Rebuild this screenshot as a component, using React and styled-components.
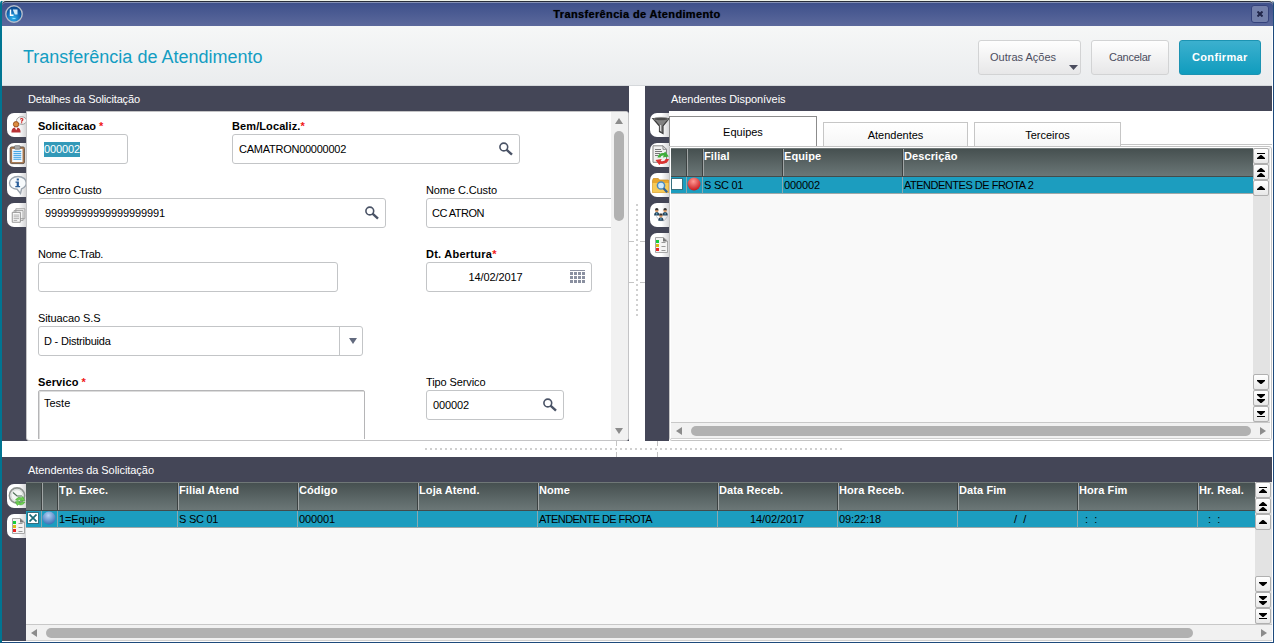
import React from 'react';
import styled, { createGlobalStyle, css } from 'styled-components';

const DARK = '#444657';
const BLUE = '#1c9dbf';

function SearchIcon() {
    return (
        <svg width="14" height="14" viewBox="0 0 14 14" fill="none" stroke="#4a5366">
            <circle cx="4.800" cy="5" r="3.900" strokeWidth="1.600" />
            <path d="M7.500 7.700l5.500 4.900" strokeWidth="2.400" />
        </svg>
    );
}

function CalendarIcon() {
    const cols = [0, 4, 8, 12];
    const rows = [3, 7, 11];
    return (
        <svg width="15" height="14" viewBox="0 0 15 14" fill="#8a90a0">
            <rect width="15" height="1" />
            {rows.map(y => cols.map(x => <rect key={`${x}-${y}`} x={x} y={y - 1} width="3" height="3" />))}
        </svg>
    );
}

function Arrow({ dir, color = '#8c8c8c', w = 7, h = 6 }) {
    const shapes = {
        up: `M0 ${h}L${w / 2} 0L${w} ${h}Z`,
        down: `M0 0H${w}L${w / 2} ${h}Z`,
        left: `M${w} 0V${h}L0 ${h / 2}Z`,
        right: `M0 0V${h}L${w} ${h / 2}Z`,
    };
    return <svg width={w} height={h} fill={color}><path d={shapes[dir]} /></svg>;
}

const navShapes = {
    first: 'M4 5h8v1h-8z M7.5 7h1l3.500 3v1h-8v-1z',
    pageUp: 'M7.5 4h1l3.500 3v1h-8v-1z M7.5 9h1l3.500 3v1h-8v-1z',
    up: 'M7.5 6h1l3.500 3v1h-8v-1z',
    down: 'M4 6h8v1l-3.500 3h-1l-3.500-3z',
    pageDown: 'M4 4h8v1l-3.500 3h-1l-3.500-3z M4 9h8v1l-3.500 3h-1l-3.500-3z',
    last: 'M4 5h8v1l-3.500 3h-1l-3.500-3z M4 10h8v1h-8z',
};

function LogoIcon() {
    return (
        <svg width="18" height="18" viewBox="0 0 18 18">
            <defs>
                <radialGradient id="logo" cx="45%" cy="75%" r="70%">
                    <stop offset="0" stopColor="#30b4ee" />
                    <stop offset=".6" stopColor="#1268b4" />
                    <stop offset="1" stopColor="#0d4486" />
                </radialGradient>
            </defs>
            <circle cx="9" cy="9" r="8.2" fill="url(#logo)" stroke="#b3bccb" strokeWidth="1.4" />
            <path d="M5.5 4.5v5.800h3" fill="none" stroke="#fff" strokeWidth="1.4" />
            <path d="M7.800 4.500h4.700v5H9.800z" fill="#d3ecfa" />
            <path d="M7.5 13.5h3" stroke="#8fdcff" />
        </svg>
    );
}

// icones das abas laterais
const sideIcons = {
    person: (
        <g transform="translate(3.500 1) scale(.92)">
            <ellipse cx="12" cy="5" rx="5.5" ry="4.2" fill="#f4f4f4" stroke="#999" />
            <path d="M9 8.500l-1 3 4-3z" fill="#eee" stroke="#aaa" strokeWidth=".5" />
            <path d="M10.7 3.700q1.5-1.800 2.700-.3.4 1-1.200 2v.8M12.100 6.900v1" fill="none" stroke="#cf2020" strokeWidth="1.3" />
            <circle cx="6" cy="9" r="2.900" fill="#dc8c40" stroke="#9a4f1c" />
            <path d="M1 18q0-5 3.6-5.6h2.8Q11 13 11 18z" fill="#b83236" />
            <path d="M4.6 12.4l1.6 3 1.6-3z" fill="#fff" />
        </g>
    ),
    clipboard: (
        <g transform="translate(2 0) scale(.98)">
            <rect x="1.2" y="2" width="14.6" height="17" rx="1.5" fill="#a9784f" stroke="#6b5a4c" />
            <rect x="3.2" y="4" width="10.6" height="13.4" fill="#f6fbff" />
            <rect x="5.5" y=".7" width="6" height="3.6" rx="1" fill="#aaa" stroke="#666" strokeWidth=".7" />
            <path d="M4.5 6.5h8M4.5 8.5h8M4.5 10.5h8M4.5 12.5h8M4.5 14.5h8" stroke="#2596df" />
        </g>
    ),
    info: (
        <g transform="translate(1.5 0)">
            <path d="M9.5 1.5c5 0 8.2 2.9 8.2 6.5 0 2.6-1.8 4.7-4.6 5.8L12 18.4l-3.4-4.1C4 14 1 11.4 1 8s3.5-6.5 8.500-6.500z" fill="#f7fafc" stroke="#9aa4ae" strokeWidth="1.4" />
            <path d="M8.200 3.500h2.200v2H8.200zM7 6.500h3.400v4.500h1.200v1.200H6.800V11h1.400V7.700H7z" fill="#285d99" />
        </g>
    ),
    copies: (
        <g transform="translate(3 1.500) scale(.9)">
            <path d="M6.500 2.500h10v11h-10z M4.500 4.500h10v11h-10z" fill="#f3f3f3" stroke="#9c9c9c" />
            <path d="M2.500 6.500h9v11h-9z" fill="#fafafa" stroke="#8c8c8c" />
            <path d="M4 9.500h6M4 11.500h6M4 13.500h6M4 15.500h4" stroke="#a5a5a5" />
        </g>
    ),
    funnel: (
        <g transform="translate(1.500 1)">
            <path d="M1.500 2.500h16l-6 7.500v7.500l-3.500-1.800V10z" fill="#818181" stroke="#3c3c3c" strokeWidth="1.200" />
            <ellipse cx="9.500" cy="3" rx="7.500" ry="1.700" fill="#4c4c4c" stroke="#999" strokeWidth=".6" />
            <path d="M9 9v6" stroke="#d7d7d7" strokeWidth="1.300" />
        </g>
    ),
    refreshDoc: (
        <g transform="translate(.5 0)">
            <path d="M2.500.800h10l3.500 3.500v13H2.500z" fill="#f0f0f0" stroke="#858585" />
            <path d="M12.500.800v3.500H16" fill="none" stroke="#858585" />
            <path d="M4.500 4.500h6M4.500 6.500h7M4.500 8.500h5M4.500 10.500h3" stroke="#777" />
            <path d="M7 12.500q1-5 6.500-4.500l1.200-1.500 3.600 5-6 1 1-2q-3-.5-3.300 2z" fill="#3fae3c" />
            <path d="M18.500 14q-1.500 5.500-8.500 4.800l-1.200 1.200L5 15l6.200-1-1 2q4 .8 5-2z" fill="#da3232" />
        </g>
    ),
    folder: (
        <g transform="translate(1 .5)">
            <path d="M1.500 5l.8-2h5l1.200 1.500h9V17h-16z" fill="#e9a62b" stroke="#c98a20" strokeWidth=".7" />
            <path d="M1.500 7.500h16V17h-16z" fill="#f6ca58" />
            <circle cx="10" cy="10" r="3.600" fill="#cfeafc" stroke="#4c8bc0" strokeWidth="1.500" />
            <path d="M12.500 12.800l3.700 4" stroke="#2e5f96" strokeWidth="2.200" />
        </g>
    ),
    people: (
        <g transform="translate(2.800 2.500) scale(.88)">
            <path d="M4 10l4 5h5l4-5M6 7h8" fill="none" stroke="#b9bdc2" />
            {[[4.5, 3.5], [14, 3.5], [9.2, 9.5]].map(([x, y]) => (
                <g key={`${x}-${y}`}>
                    <path d={`M${x - 3} ${y + 5.5}q0-4 3-4t3 4z`} fill="#25445c" />
                    <circle cx={x} cy={y} r="2" fill="#e2a16a" />
                    <path d={`M${x - 2} ${y - 0.5}q0-2.300 2-2.300t2 2.300z`} fill="#333" />
                    <path d={`M${x} ${y + 2.5}v2`} stroke="#7fd0ef" />
                </g>
            ))}
        </g>
    ),
    legend: (
        <>
            <path d="M5.500 2.500h8l4 3.500v11.500h-12z" fill="#f4f4f4" stroke="#a8a8a8" />
            <path d="M13 2.500v4h4.500z" fill="#777" />
            <path d="M11.500 7.500h4M11.500 11.500h4M11.500 15.500h4" stroke="#999" />
            <rect x="6" y="5" width="3" height="3" fill="#16ce3d" />
            <rect x="6" y="9" width="3" height="3" fill="#d8bd18" />
            <rect x="6" y="13" width="3" height="3" fill="#ea2424" />
        </>
    ),
    clock: (
        <g transform="translate(.5 .5)">
            <circle cx="9.500" cy="9" r="7.600" fill="#f3f5f3" stroke="#8e9490" strokeWidth="1.600" />
            <circle cx="9.500" cy="9" r="5.900" fill="none" stroke="#c9cfca" strokeWidth=".7" />
            <path d="M5.500 6l4 3.500h5" fill="none" stroke="#54735b" strokeWidth="1.200" />
            <path d="M8 13.500q2-4 6-2.200l1.200-1.300 2.300 4-4.800.4.800-1.300q-2-.7-3 1z" fill="#6ed04f" stroke="#3c9a34" strokeWidth=".5" />
            <path d="M17.500 15.500q-2 4-6.500 2.500l-1.200 1-2-3.700 4.700-.5-.8 1.400q2 .8 3.200-.9z" fill="#6ed04f" stroke="#3c9a34" strokeWidth=".5" />
        </g>
    ),
};

function SideTabs({ icons }) {
    return (
        <Side>
            {icons.map(name => (
                <SideTab key={name}>
                    <svg width="19" height="20" viewBox="0 0 19 20">{sideIcons[name]}</svg>
                </SideTab>
            ))}
        </Side>
    );
}

function Ball({ color, light, id }) {
    return (
        <BallSvg width="14" height="14" viewBox="0 0 14 14">
            <defs>
                <radialGradient id={id} cx="45%" cy="30%" r="70%">
                    <stop offset="0" stopColor={light} />
                    <stop offset="1" stopColor={color} />
                </radialGradient>
            </defs>
            <circle cx="7" cy="7" r="6.500" fill={`url(#${id})`} />
        </BallSvg>
    );
}

function Field({ label, value, required, bold, gap, span, width, icon, align, selected, pad, spacing, labelSpacing }) {
    return (
        <FieldBox $span={span}>
            <Label $bold={bold} $spacing={labelSpacing}>{label}{required && <Star $gap={gap}>*</Star>}</Label>
            <Input $width={width} $pad={pad}>
                <Value $align={align} $spacing={spacing}>{selected ? <Selected>{value}</Selected> : value}</Value>
                {icon}
            </Input>
        </FieldBox>
    );
}

function NavColumn() {
    const btn = name => (
        <NavButton key={name}>
            <svg width="16" height="16" viewBox="0 0 16 16"><path d={navShapes[name]} /></svg>
        </NavButton>
    );
    return (
        <NavCol>
            <div>{['first', 'pageUp', 'up'].map(btn)}</div>
            <div>{['down', 'pageDown', 'last'].map(btn)}</div>
        </NavCol>
    );
}

function Browse({ columns, row, checked, ball, thumb }) {
    const template = ['16px', '16px', ...columns.map(c => c.width)].join(' ');
    return (
        <BrowseBox>
            <BrowseMain>
                <Grid>
                    <HeadRow $cols={template}>
                        <HeadCell /><HeadCell />
                        {columns.map(c => <HeadCell key={c.title}>{c.title}</HeadCell>)}
                    </HeadRow>
                    <DataRow $cols={template}>
                        <Cell $icon><Check $checked={checked}>{checked && <svg width="8" height="8" stroke="#1b6c77" strokeWidth="1.700"><path d="M.5.5l7 7M7.500.5l-7 7" /></svg>}</Check></Cell>
                        <Cell $icon>{ball}</Cell>
                        {row.map((v, i) => <Cell key={i} $indent={columns[i].indent} $spacing={columns[i].spacing}>{v}</Cell>)}
                    </DataRow>
                </Grid>
                <NavColumn />
            </BrowseMain>
            <HScroll>
                <Arrow dir="left" w={6} h={8} />
                <Track><HThumb $width={thumb} /></Track>
                <Arrow dir="right" w={6} h={8} />
            </HScroll>
        </BrowseBox>
    );
}

const teamColumns = [
    { title: 'Filial', width: '80px', spacing: '-0.25px' },
    { title: 'Equipe', width: '120px', spacing: '-0.1px' },
    { title: 'Descrição', width: '1fr', spacing: '-0.49px' },
];

const requestColumns = [
    { title: 'Tp. Exec.', width: '120px', spacing: '-0.1px' },
    { title: 'Filial Atend', width: '120px', spacing: '-0.25px' },
    { title: 'Código', width: '120px', spacing: '-0.1px' },
    { title: 'Loja Atend.', width: '120px' },
    { title: 'Nome', width: '180px', spacing: '-0.59px' },
    { title: 'Data Receb.', width: '120px', indent: 31, spacing: '-0.1px' },
    { title: 'Hora Receb.', width: '120px', spacing: '-0.1px' },
    { title: 'Data Fim', width: '120px', indent: 55 },
    { title: 'Hora Fim', width: '120px', indent: 6 },
    { title: 'Hr. Real.', width: '1fr', indent: 9 },
];

function App() {
    return (
        <Window>
            <GlobalStyle />
            <TitleBar>
                <LogoIcon />
                <TitleText>Transferência de Atendimento</TitleText>
                <CloseButton>
                    <svg width="6" height="6" stroke="#20264a" strokeWidth="2"><path d="M.5.5l5 5M5.500.5l-5 5" /></svg>
                </CloseButton>
            </TitleBar>
            <Header>
                <H1>Transferência de Atendimento</H1>
                <Button $width="103px" $left="11px">
                    Outras Ações
                    <Caret><Arrow dir="down" color="#4b4d5e" w={9} h={5} /></Caret>
                </Button>
                <Button $width="78px" $left="17px" $spacing="-0.25px">Cancelar</Button>
                <Button $width="82px" $left="12px" $spacing="0.35px" $primary>Confirmar</Button>
            </Header>
            <Top>
                <Panel $width="627px">
                    <PanelTitle $spacing="-0.13px">Detalhes da Solicitação</PanelTitle>
                    <PanelBody>
                        <SideTabs icons={['person', 'clipboard', 'info', 'copies']} />
                        <Card>
                            <Form>
                                <Field label="Solicitacao" value="000002" required gap bold selected width="90px" pad="5px" spacing="-0.1px" />
                                <Field label="Bem/Localiz." value="CAMATRON00000002" required bold span={2} width="288px" icon={<SearchIcon />} spacing="-0.25px" labelSpacing="0.1px" />
                                <Field label="Centro Custo" value="99999999999999999991" span={2} width="348px" icon={<SearchIcon />} spacing="-0.12px" labelSpacing="-0.1px" />
                                <Field label="Nome C.Custo" value="CC ATRON" width="300px" pad="5px" spacing="-0.5px" labelSpacing="-0.1px" />
                                <Field label="Nome C.Trab." value="" span={2} width="300px" labelSpacing="-0.3px" />
                                <Field label="Dt. Abertura" value="14/02/2017" required bold align="center" width="166px" icon={<CalendarIcon />} spacing="-0.1px" labelSpacing="0.25px" />
                                <FieldBox $span={3}>
                                    <Label $spacing="-0.1px">Situacao S.S</Label>
                                    <Input $width="325px" $pad="5px">
                                        <Value $spacing="-0.2px">D - Distribuida</Value>
                                        <SelectArrow><Arrow dir="down" color="#626a7e" w={8} h={6} /></SelectArrow>
                                    </Input>
                                </FieldBox>
                                <FieldBox $span={2}>
                                    <Label $bold $spacing="0.1px">Servico<Star $gap>*</Star></Label>
                                    <TextArea>Teste</TextArea>
                                </FieldBox>
                                <Field label="Tipo Servico" value="000002" width="138px" icon={<SearchIcon />} spacing="-0.1px" labelSpacing="-0.1px" />
                            </Form>
                            <VScroll>
                                <Arrow dir="up" w={8} h={6} />
                                <VTrack><VThumb /></VTrack>
                                <Arrow dir="down" w={8} h={6} />
                            </VScroll>
                        </Card>
                    </PanelBody>
                </Panel>
                <SplitterV>
                    <svg width="16" height="113" viewBox="0 0 16 113" fill="none">
                        <path d="M8 0v113" stroke="#d0d0d0" strokeWidth="2" strokeDasharray="2 3" />
                        <path d="M0 37.500h5M11 37.500h5M0 78.500h5M11 78.500h5" stroke="#c4c4c4" />
                    </svg>
                </SplitterV>
                <Panel $grow>
                    <PanelTitle>Atendentes Disponíveis</PanelTitle>
                    <PanelBody>
                        <SideTabs icons={['funnel', 'refreshDoc', 'folder', 'people', 'legend']} />
                        <TabCard>
                            <Tabs>
                                <Tab $active>Equipes</Tab>
                                <Tab $width="145px">Atendentes</Tab>
                                <Tab $width="147px">Terceiros</Tab>
                                <TabLine />
                            </Tabs>
                            <TabPage>
                                <Browse
                                    columns={teamColumns}
                                    row={['S SC 01', '000002', 'ATENDENTES DE FROTA 2']}
                                    ball={<Ball id="red" color="#c9181d" light="#ff9a94" />}
                                    thumb="560px"
                                />
                            </TabPage>
                        </TabCard>
                    </PanelBody>
                </Panel>
            </Top>
            <SplitterH>
                <svg width="418" height="16" viewBox="0 0 418 16" fill="none">
                    <path d="M0 8h418" stroke="#d0d0d0" strokeWidth="2" strokeDasharray="2 3" />
                    <path d="M191.500 0v5M191.500 11v5M232.500 0v5M232.500 11v5" stroke="#c4c4c4" />
                </svg>
            </SplitterH>
            <BottomPanel>
                <PanelTitle>Atendentes da Solicitação</PanelTitle>
                <PanelBody>
                    <SideTabs icons={['clock', 'legend']} />
                    <Browse
                        columns={requestColumns}
                        row={['1=Equipe', 'S SC 01', '000001', '', 'ATENDENTE DE FROTA', '14/02/2017', '09:22:18', '/  /', ':  :', ':  :']}
                        checked
                        ball={<Ball id="blue" color="#3b70b6" light="#b4d2f5" />}
                        thumb="1147px"
                    />
                </PanelBody>
            </BottomPanel>
        </Window>
    );
}

const GlobalStyle = createGlobalStyle`
    * { box-sizing: border-box; }
    body {
        margin: 0;
        background: #fff;
        font-family: "Liberation Sans", Arial, sans-serif;
        font-size: 11px;
        color: #000;
    }
    svg { display: block; flex: none; }
`;

const Window = styled.div`
    display: flex;
    flex-direction: column;
    width: 1274px;
    height: 643px;
    padding-right: 1px;
    border-left: 2px solid #007592;
    border-right: 1px solid #1d4a7c;
    border-bottom: 1px solid #1d4a7c;
    border-top: 1px solid #eef3ea;
    border-radius: 4px 4px 0 0;
    overflow: hidden;
`;

const TitleBar = styled.div`
    flex: none;
    display: flex;
    align-items: center;
    height: 25px;
    margin-right: -1px;
    padding: 0 4px 0 3px;
    background: linear-gradient(#3c4f8a, #5c699c);
    border-top: 1px solid #272d3a;
    border-radius: 4px 4px 0 0;
    box-shadow: inset 0 1px #8590b3;
`;

const TitleText = styled.div`
    flex: 1;
    text-align: center;
    font-weight: bold;
    letter-spacing: 0.36px;
    text-shadow: 0 0 1px #1a2344;
`;

const CloseButton = styled.div`
    display: flex;
    align-items: center;
    justify-content: center;
    width: 18px;
    height: 18px;
    border: 1px solid #34427c;
    border-radius: 3px;
    background: #727faa;
`;

const Header = styled.div`
    flex: none;
    display: flex;
    align-items: center;
    gap: 10px;
    height: 60px;
    padding: 4px 11px 0 21px;
    background: linear-gradient(#f6f7f7, #eaecee);
    border-bottom: 1px solid #d5d8db;
`;

const H1 = styled.h1`
    flex: 1;
    margin: 0 0 1px;
    font-size: 18px;
    font-weight: normal;
    color: #139dc2;
`;

const Button = styled.div`
    position: relative;
    display: flex;
    align-items: center;
    width: ${p => p.$width};
    height: 35px;
    padding-bottom: 1px;
    padding-left: ${p => p.$left};
    white-space: nowrap;
    letter-spacing: ${p => p.$spacing || 'normal'};
    border: 1px solid #d2d3d4;
    border-radius: 3px;
    background: linear-gradient(#fefefe, #e7e7e8);
    color: #4b4d5e;
    ${p => p.$primary && css`
        border-color: #1c93b2;
        background: linear-gradient(#3cb0ce, #109cbe);
        color: #fff;
        font-weight: bold;
    `}
`;

const Caret = styled.span`
    position: absolute;
    right: 2px;
    bottom: 4px;
`;

const Top = styled.div`
    flex: none;
    display: flex;
    height: 355px;
`;

const Panel = styled.div`
    display: flex;
    flex-direction: column;
    width: ${p => p.$width};
    flex: ${p => p.$grow ? '1' : 'none'};
    min-width: 0;
    background: ${DARK};
`;

const BottomPanel = styled(Panel)`
    height: 184px;
`;

const PanelTitle = styled.div`
    flex: none;
    height: 25px;
    padding-left: 26px;
    line-height: 26px;
    letter-spacing: ${p => p.$spacing || '-0.05px'};
    color: #fff;
`;

const PanelBody = styled.div`
    flex: 1;
    display: flex;
    min-height: 0;
`;

const Side = styled.div`
    flex: none;
    display: flex;
    flex-direction: column;
    align-items: flex-end;
    gap: 6px;
    width: 24px;
    padding-top: 2px;
`;

const SideTab = styled.div`
    display: flex;
    align-items: center;
    width: 19px;
    height: 24px;
    border-radius: 7px 0 0 7px;
    background: linear-gradient(90deg, #fff 60%, #d6d6d8);
    overflow: hidden;
`;

const Card = styled.div`
    flex: 1;
    display: flex;
    min-width: 0;
    border: 1px solid #c4c4c6;
    border-radius: 0 3px 3px 3px;
    background: #fff;
    overflow: hidden;
`;

const Form = styled.div`
    flex: 1;
    display: grid;
    grid-template-columns: 194px 194px 1fr;
    grid-auto-rows: 64px;
    min-width: 0;
    margin-bottom: 1px;
    padding: 6px 0 0 11px;
    overflow: hidden;
`;

const FieldBox = styled.div`
    grid-column: span ${p => p.$span || 1};
    min-width: 0;
`;

const Label = styled.div`
    height: 16px;
    line-height: 17px;
    white-space: nowrap;
    letter-spacing: ${p => p.$spacing || 'normal'};
    font-weight: ${p => p.$bold ? 'bold' : 'normal'};
`;

const Star = styled.span`
    margin-left: ${p => p.$gap ? '3px' : '0'};
    color: #f01818;
`;

const Input = styled.div`
    display: flex;
    align-items: center;
    width: ${p => p.$width};
    height: 30px;
    padding: 0 6px 0 ${p => p.$pad || '6px'};
    border: 1px solid #c3c5c7;
    border-radius: 3px;
    background: #fff;
`;

const Value = styled.span`
    flex: 1;
    padding-right: ${p => p.$align === 'center' ? '12px' : '0'};
    text-align: ${p => p.$align || 'left'};
    letter-spacing: ${p => p.$spacing || 'normal'};
    white-space: nowrap;
`;

const Selected = styled.span`
    display: inline-block;
    height: 15px;
    line-height: 15px;
    background: #3399b8;
    color: #fff;
`;

const SelectArrow = styled.div`
    display: flex;
    align-items: center;
    justify-content: center;
    width: 23px;
    height: 28px;
    margin-right: -6px;
    padding-left: 3px;
    border-left: 1px solid #c3c5c7;
`;

const TextArea = styled.div`
    width: 327px;
    height: 80px;
    padding: 6px 5px;
    border: 1px solid #b5b5b7;
    border-radius: 2px;
    box-shadow: inset 1px 1px #dcdcdc;
`;

const VScroll = styled.div`
    display: flex;
    flex-direction: column;
    align-items: center;
    width: 17px;
    padding: 6px 1px 6px 0;
    background: #f1f1f1;
`;

const VTrack = styled.div`
    flex: 1;
    padding-top: 7px;
`;

const VThumb = styled.div`
    width: 10px;
    height: 90px;
    border-radius: 5px;
    background: #b1b1b1;
`;

const SplitterV = styled.div`
    flex: none;
    display: flex;
    width: 16px;
    padding-top: 118px;
    background: #fff;
`;

const SplitterH = styled.div`
    flex: none;
    height: 16px;
    padding-left: 423px;
    background: #fff;
`;

const TabCard = styled.div`
    flex: 1;
    display: flex;
    flex-direction: column;
    min-width: 0;
    background: #fff;
`;

const Tabs = styled.div`
    flex: none;
    display: flex;
    align-items: flex-end;
    gap: 6px;
    height: 35px;
`;

const Tab = styled.div`
    width: ${p => p.$width || '148px'};
    height: ${p => p.$active ? '30px' : '24px'};
    padding-top: 1px;
    line-height: ${p => p.$active ? '28px' : '22px'};
    text-align: center;
    border: 1px solid ${p => p.$active ? '#8c8c8c' : '#c6c6c6'};
    border-bottom: none;
    background: ${p => p.$active ? '#fff' : 'linear-gradient(#fff, #f6f6f6)'};
`;

const TabLine = styled.div`
    flex: 1;
    height: 2px;
    margin-left: -6px;
    border-top: 1px solid #c6c6c6;
`;

const TabPage = styled.div`
    flex: 1;
    display: flex;
    min-height: 0;
    padding: 1px;
    border: 1px solid #c4c4c4;
    border-radius: 0 3px 3px 3px;
`;

const BrowseBox = styled.div`
    flex: 1;
    display: flex;
    flex-direction: column;
    min-width: 0;
    background: #f9f9f9;
`;

const BrowseMain = styled.div`
    flex: 1;
    display: flex;
    min-height: 0;
`;

const Grid = styled.div`
    flex: 1;
    min-width: 0;
`;

const HeadRow = styled.div`
    display: grid;
    grid-template-columns: ${p => p.$cols};
    height: 29px;
    background: linear-gradient(#465050, #6b7777);
    border-top: 1px solid #6f7777;
    border-bottom: 1px solid #444b4b;
`;

const HeadCell = styled.div`
    line-height: 15px;
    white-space: nowrap;
    letter-spacing: 0.1px;
    overflow: hidden;
    color: #fff;
    font-weight: bold;
    box-shadow: inset -1px 0 #3c4242;
    & + & { border-left: 1px solid #a0a5a5; }
    &:last-child { box-shadow: none; }
`;

const DataRow = styled.div`
    display: grid;
    grid-template-columns: ${p => p.$cols};
    height: 17px;
    background: ${BLUE};
    border-bottom: 1px solid #9fa8a8;
`;

const Cell = styled.div`
    display: ${p => p.$icon ? 'flex' : 'block'};
    padding-left: ${p => p.$indent ? p.$indent + 1 : 1}px;
    line-height: 17px;
    letter-spacing: ${p => p.$spacing || 'normal'};
    white-space: pre;
    border-right: 1px solid #8aa9b0;
    &:last-child { border-right: none; }
`;

const Check = styled.span`
    display: flex;
    align-items: center;
    justify-content: center;
    width: 10px;
    height: 10px;
    margin-top: 2px;
    margin-left: ${p => p.$checked ? '1px' : '0'};
    background: #fff;
    outline: 1px solid #35707f;
`;

const BallSvg = styled.svg`
    margin-left: -1px;
`;

const NavCol = styled.div`
    flex: none;
    display: flex;
    flex-direction: column;
    justify-content: space-between;
    width: 17px;
    padding-right: 1px;
    background: #e3e3e3;
`;

const NavButton = styled.div`
    width: 16px;
    height: 16px;
    border: 1px solid #b0b0b0;
    border-radius: 2px;
    background: linear-gradient(#fff, #e8e8e8);
    svg { margin: -1px; }
`;

const HScroll = styled.div`
    flex: none;
    display: flex;
    align-items: center;
    height: 17px;
    padding: 0 5px;
    border-top: 1px solid #c8c8c8;
    border-bottom: 1px solid #d0d0d0;
    background: #f1f1f1;
`;

const Track = styled.div`
    flex: 1;
    padding: 0 9px;
`;

const HThumb = styled.div`
    width: ${p => p.$width};
    height: 10px;
    border-radius: 5px;
    background: #b1b1b1;
`;

export default App;
